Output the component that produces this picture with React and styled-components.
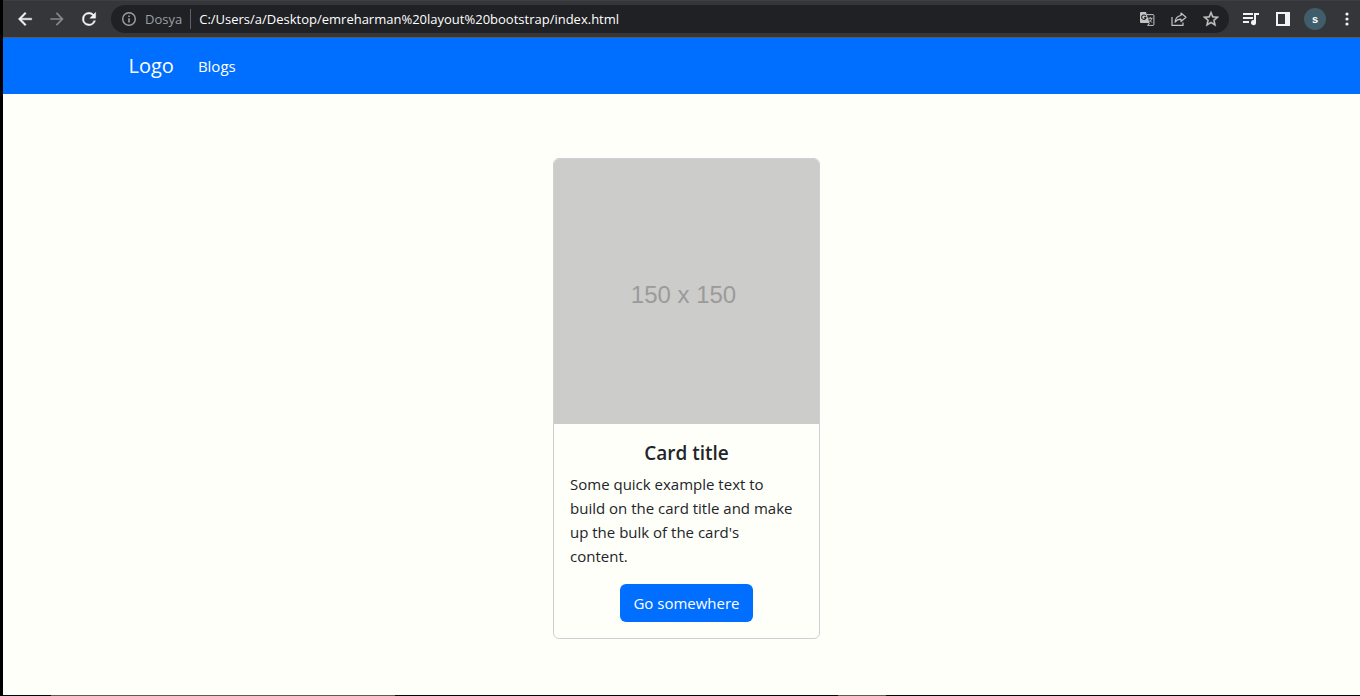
import React from "react";
import styled, { createGlobalStyle } from "styled-components";

const Global = createGlobalStyle`
  *, *::before, *::after { box-sizing: border-box; }
  body {
    margin: 0;
    background: #fffffa;
    color: #212529;
    font: 400 15px/24px "Open Sans", "Noto Sans", sans-serif;
  }
`;

const Screen = styled.div`
  display: flex;
  flex-direction: column;
  min-height: 100vh;
  border-left: 3px solid #000;
`;

const BrowserBar = styled.header`
  display: flex;
  align-items: center;
  height: 38px;
  padding: 0 5px 0 6px;
  background: #35363a;
  border-top: 1px solid #3c4043;
  border-bottom: 1px solid #5b5c5f;
`;

const ToolButton = styled.button`
  display: flex;
  flex: none;
  align-items: center;
  justify-content: center;
  width: 32px;
  height: 28px;
  padding: 0;
  border: 0;
  background: none;
  color: ${(p) => p.$tone || "#f1f3f4"};
`;

const MenuButton = styled(ToolButton)`
  width: 16px;
  margin-left: 8px;
`;

const Icon = styled.svg`
  display: block;
  width: ${(p) => p.$size || 20}px;
  height: ${(p) => p.$size || 20}px;
  fill: currentColor;
`;

const AddressBar = styled.div`
  display: flex;
  flex: 1;
  align-items: center;
  min-width: 0;
  height: 28px;
  margin: 0 6px;
  padding: 0 2px 0 10px;
  border-radius: 14px;
  background: #202124;
  color: #9aa0a6;
  font-size: 13px;
  line-height: 20px;
`;

const Scheme = styled.span`
  margin: 0 8px;
`;

const Address = styled.input`
  flex: 1;
  min-width: 0;
  height: 20px;
  padding: 0 0 0 8px;
  border: 0;
  border-left: 1px solid #5f6368;
  outline: 0;
  background: none;
  color: #fff;
  font: inherit;
`;

const Avatar = styled.span`
  width: 22px;
  height: 22px;
  border-radius: 50%;
  background: #3f5d6b;
  color: #fff;
  font-size: 11px;
  font-weight: 600;
  line-height: 22px;
`;

const Navbar = styled.nav`
  padding: 8px 0 8px 10px;
  background: #006eff;
`;

const Container = styled.div`
  display: flex;
  align-items: center;
  max-width: 1140px;
  height: 40px;
  margin: 0 auto;
  padding: 0 12px;
`;

const Brand = styled.a`
  margin-right: 24px;
  color: #fff;
  font-size: 20px;
  line-height: 30px;
  text-decoration: none;
`;

const NavLink = styled.a`
  color: #fff;
  text-decoration: none;
`;

const Main = styled.main`
  display: flex;
  flex: 1;
  align-items: flex-start;
  justify-content: center;
  padding: 64px 0 0 10px;
`;

const Card = styled.article`
  width: 267px;
  border: 1px solid #ced0d3;
  border-radius: 6px;
  overflow: hidden;
`;

const Placeholder = styled.div`
  display: flex;
  align-items: center;
  justify-content: center;
  aspect-ratio: 1;
  padding: 6px 6px 0 0;
  background: #cccccb;
  color: #9b9b9a;
  font: 24px/32px "Liberation Sans", sans-serif;
`;

const CardBody = styled.div`
  display: flex;
  flex-direction: column;
  align-items: center;
  padding: 16px;
`;

const CardTitle = styled.h5`
  margin: 0 0 6px;
  font-size: 19px;
  font-weight: 600;
  line-height: 26px;
`;

const CardText = styled.p`
  align-self: stretch;
  margin: 0 0 16px;
`;

const PrimaryButton = styled.button`
  height: 38px;
  padding: 0 13px;
  border: 0;
  border-radius: 6px;
  background: #006eff;
  color: #fff;
  font: inherit;
`;

const BottomEdge = styled.div`
  display: flex;
  height: 1px;
  background: #02060f;
`;

const EdgeTab = styled.span`
  width: ${(p) => p.$width}px;
  margin-left: ${(p) => p.$offset}px;
  background: #5d5b5c;
`;

export default function App() {
  return (
    <>
      <Global />
      <Screen>
        <BrowserBar>
          <ToolButton aria-label="Back">
            <Icon viewBox="0 0 24 24"><path d="M20 11H7.83l5.59-5.59L12 4l-8 8 8 8 1.41-1.41L7.83 13H20v-2z" stroke="currentColor" strokeWidth=".5" /></Icon>
          </ToolButton>
          <ToolButton aria-label="Forward" $tone="#87888a">
            <Icon viewBox="0 0 24 24"><path d="M12 4l-1.41 1.41L16.17 11H4v2h12.17l-5.58 5.59L12 20l8-8z" /></Icon>
          </ToolButton>
          <ToolButton aria-label="Reload">
            <Icon viewBox="0 0 24 24"><path d="M17.65 6.35A7.96 7.96 0 0 0 12 4a8 8 0 1 0 7.73 10h-2.08A6 6 0 1 1 12 6c1.66 0 3.14.69 4.22 1.78L13 11h7V4z" stroke="currentColor" strokeWidth=".5" /></Icon>
          </ToolButton>
          <AddressBar>
            <Icon $size={16} viewBox="0 0 16 16"><path fillRule="evenodd" d="M8 1a7 7 0 1 0 0 14A7 7 0 0 0 8 1zm0 1.4a5.6 5.6 0 1 1 0 11.2A5.6 5.6 0 0 1 8 2.400zM7.200 4.500h1.600v1.600H7.200zm0 2.700h1.600v4.300H7.200z" /></Icon>
            <Scheme>Dosya</Scheme>
            <Address aria-label="Address" defaultValue="C:/Users/a/Desktop/emreharman%20layout%20bootstrap/index.html" />
            <ToolButton aria-label="Translate" $tone="#c2c4c3">
              <Icon $size={16} viewBox="0 0 16 16">
                <path d="M1 2a1 1 0 0 1 1-1h5l3.500 11H2a1 1 0 0 1-1-1z" />
                <path d="M8 3.600h6a.9.9 0 0 1 .9.9v9a.9.9 0 0 1-.9.9H8.600l1.900-2.400" fill="none" stroke="currentColor" strokeWidth="1" />
                <path d="M6.800 5.200A2.200 2.200 0 1 0 7 6.600H5.100" fill="none" stroke="#202124" strokeWidth="1.100" />
                <path d="M9.200 7.300h4.300M11.300 6v1.300M12.800 7.400c-.4 1.600-1.300 2.700-2.300 3.500M10.200 8.600l2.700 3" fill="none" stroke="currentColor" strokeWidth=".9" />
              </Icon>
            </ToolButton>
            <ToolButton aria-label="Share" $tone="#c2c4c3">
              <Icon $size={16} viewBox="0 0 16 16">
                <path d="M1 6v8.400h11V11.500" fill="none" stroke="currentColor" strokeWidth="1.200" />
                <path d="M10 2l5 4.300-5 4.200V8.100C7.500 8.100 5.500 9 4 11.200c.3-3.500 2.300-6.200 6-6.700z" fill="none" stroke="currentColor" strokeWidth="1.200" strokeLinejoin="round" />
              </Icon>
            </ToolButton>
            <ToolButton aria-label="Bookmark" $tone="#c2c4c3">
              <Icon $size={16} viewBox="2 2 20 20"><path d="M22 9.240l-7.190-.62L12 2 9.190 8.630 2 9.240l5.460 4.730L5.820 21 12 17.270 18.180 21l-1.630-7.030zM12 15.400l-3.760 2.270 1-4.280-3.320-2.880 4.380-.38L12 6.100l1.710 4.040 4.380.38-3.320 2.880 1 4.280z" stroke="currentColor" strokeWidth=".4" /></Icon>
            </ToolButton>
          </AddressBar>
          <ToolButton aria-label="Media controls">
            <Icon viewBox="0 0 20 20">
              <path d="M2 4h10v2H2zM2 8h10v2H2zM2 12h6v2H2zM13 4h5v2h-3v7.500A2.500 2.500 0 1 1 13 11.200z" />
            </Icon>
          </ToolButton>
          <ToolButton aria-label="Side panel">
            <Icon $size={14} viewBox="0 0 14 14"><path fillRule="evenodd" d="M0 0h14v14H0zM2 2v10h7V2z" /></Icon>
          </ToolButton>
          <ToolButton aria-label="Profile"><Avatar>s</Avatar></ToolButton>
          <MenuButton aria-label="Menu">
            <Icon $size={16} viewBox="0 0 16 16"><circle cx="8" cy="3" r="1.600" /><circle cx="8" cy="8" r="1.600" /><circle cx="8" cy="13" r="1.600" /></Icon>
          </MenuButton>
        </BrowserBar>
        <Navbar>
          <Container>
            <Brand href="#">Logo</Brand>
            <NavLink href="#blogs">Blogs</NavLink>
          </Container>
        </Navbar>
        <Main>
          <Card>
            <Placeholder>150 x 150</Placeholder>
            <CardBody>
              <CardTitle>Card title</CardTitle>
              <CardText>
                Some quick example text to<br />
                build on the card title and make<br />
                up the bulk of the card's<br />
                content.
              </CardText>
              <PrimaryButton>Go somewhere</PrimaryButton>
            </CardBody>
          </Card>
        </Main>
        <BottomEdge>
          <EdgeTab $offset={48} $width={344} />
          <EdgeTab $offset={443} $width={48} />
        </BottomEdge>
      </Screen>
    </>
  );
}
